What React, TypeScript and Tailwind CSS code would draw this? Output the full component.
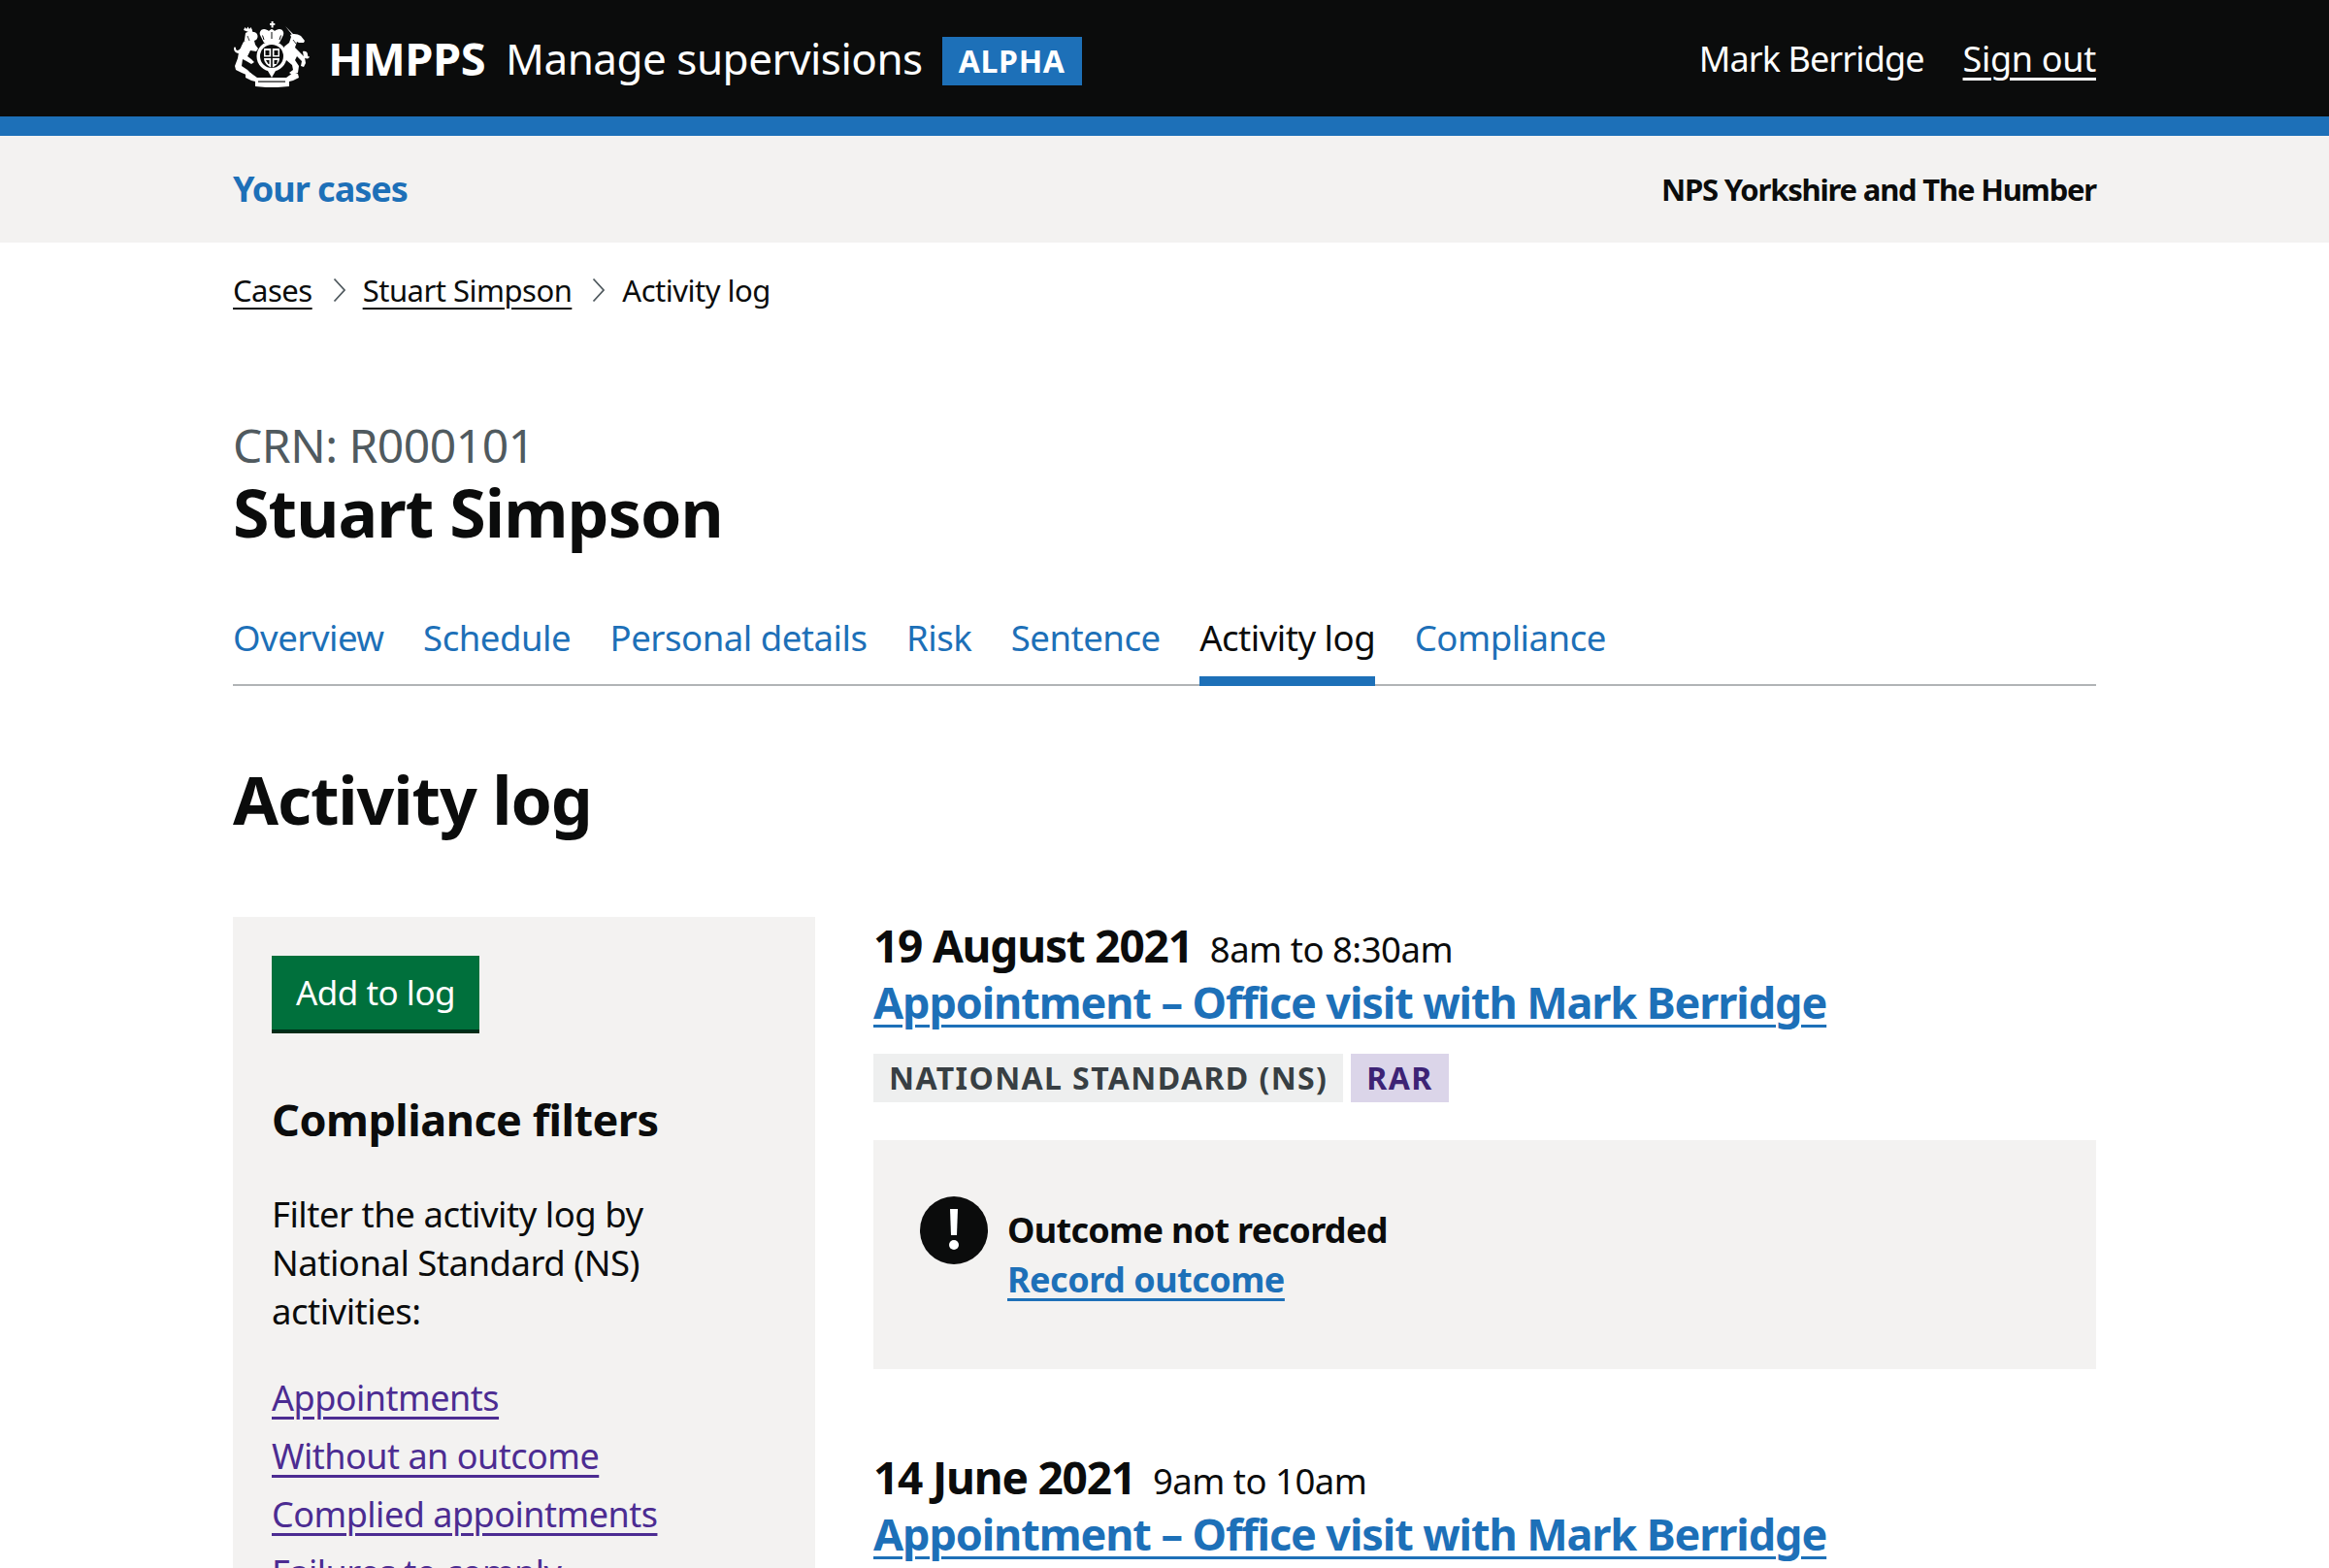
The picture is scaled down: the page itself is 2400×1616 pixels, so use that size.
import React from 'react';

const Crest = () => (
  <svg viewBox="0 0 100 90" className="w-[100px] h-[90px] -mx-[10px]" fill="#fff" stroke="none">
    {/* top crown */}
    <path d="M48 9h1.600V7h2v2h1.700v2h-1.700v2.500h-2V11H48z" />
    <path d="M42 29l-4-8c-1-3 1-6 4-6 2 0 4 1 5 2 1-1 2-2 3-2s2 1 3 2c1-1 3-2 5-2 3 0 5 3 4 6l-4 8z" />
    <path d="M42 26l-1.500-4.500M50 18v7M58 26l1.500-4.500" stroke="#0b0c0c" strokeWidth="1" />
    {/* lion */}
    <path d="M21 16l1.500-3 1.500 2 1.500-2.500 1.500 2.500 1.500-2 1.500 3v2l-1 1z" />
    <path d="M23 19c3-2 8-2 11 0 2 2 2 5 0 7l-2 1 1 4 3 4-2 3-6-1-3 6 4 3 3 3-3 2-5-3-4-2-1 7 6 4 4 4-3 2-7-3-6-3-1-4 3-8 1-6 3-7 3-6z" />
    <path d="M18 35c-3 3-5 2-5 0s-2-2-2 0c0 4 5 7 8 3z" />
    <path d="M20 24l2 4M25 22l2 5" stroke="#0b0c0c" strokeWidth="0.8" />
    {/* unicorn */}
    <path d="M64 12l8 8 1 0-1 2z" />
    <path d="M69 21c3-2 8-1 11 1l4 5-1 2-5 0-2-1-2 6 4 4 6 6 1 6-2 4-3-1 1-5-5-5-2 4 4 6-1 7-6 2-3-2 4-3-1-5-6-5-4 2-3-3 3-5 2-8 5-4 2-6z" />
    <path d="M82 38c3-1 5 1 5 3 0 2 1 3 2 2 0 3-4 3-6 1z" />
    <path d="M72 26l3 4" stroke="#0b0c0c" strokeWidth="0.8" />
    {/* shield */}
    <circle cx="50" cy="43" r="15.500" />
    <circle cx="50" cy="43" r="12" fill="#0b0c0c" />
    <path d="M42 35h16v10c0 5-4 8-8 10-4-2-8-5-8-10z" fill="#fff" />
    <path d="M49.200 35h1.600v20h-1.600zM42 43.500h16v1.600H42z" fill="#0b0c0c" />
    <path d="M43.500 37h4v5h-4zM52.500 37h4v5h-4zM44 47h3.500v4h-1zM52.500 47H56l-1 4h-2.500z" fill="#0b0c0c" />
    {/* ribbon */}
    <path d="M23 61l5-1 7 5 30 0 7-5 5 1 1 4-6 3-4 1v5l-12 1H44l-11-1v-5l-4-1-6-3z" />
    <path d="M36 68.500h28v1.200H36z" fill="#0b0c0c" />
    <path d="M46 58h8l-4 7z" />
  </svg>
);

const Chevron = () => (
  <svg viewBox="0 0 13 26" className="w-[13px] h-[26px] ml-[21px] mr-[18px] shrink-0" fill="none" stroke="#505a5f" strokeWidth="1.800">
    <path d="M1.500 1.500L12 13 1.500 24.500" />
  </svg>
);

const tabs = ['Overview', 'Schedule', 'Personal details', 'Risk', 'Sentence', 'Activity log', 'Compliance'];
const filters = ['Appointments', 'Without an outcome', 'Complied appointments', 'Failures to comply'];

const Entry = ({ date, time }: { date: string; time: string }) => (
  <>
    <div className="flex items-baseline gap-[18px] h-[59px]">
      <span className="text-[46px] leading-[58px] font-bold tracking-[-1.200px]">{date}</span>
      <span className="text-[36.500px] leading-[58px]">{time}</span>
    </div>
    <a className="block w-fit text-[45px] leading-[58px] font-bold tracking-[-1.100px] text-[#1d70b8] underline decoration-[3px] underline-offset-[6px]">
      Appointment – Office visit with Mark Berridge
    </a>
  </>
);

export default function App() {
  return (
    <div className="h-[1616px] overflow-hidden bg-white text-[#0b0c0c] font-['Noto_Sans',sans-serif] tracking-[-0.5px]">
      {/* Header */}
      <header className="bg-[#0b0c0c] border-b-[20px] border-[#1d70b8] text-white">
        <div className="w-[1920px] mx-auto h-[120px] flex items-center justify-between">
          <div className="flex items-center">
            <Crest />
            <span className="ml-[18px] text-[47px] font-bold">HMPPS</span>
            <span className="ml-[21px] text-[44px]">Manage supervisions</span>
            <span className="ml-[20px] mt-[6px] h-[50px] px-[17px] bg-[#1d70b8] text-[32px] font-bold tracking-[0.7px] flex items-center">ALPHA</span>
          </div>
          <div className="flex items-center gap-[40px] text-[36px] mt-[2px]">
            <span className="tracking-[-0.900px]">Mark Berridge</span>
            <a className="tracking-[-0.300px] underline decoration-[3px] underline-offset-[6px]">Sign out</a>
          </div>
        </div>
      </header>

      {/* Sub nav */}
      <div className="bg-[#f3f2f1] h-[110px]">
        <div className="w-[1920px] mx-auto h-full flex items-center justify-between">
          <a className="text-[36px] font-bold tracking-[-1px] text-[#1d70b8]">Your cases</a>
          <span className="text-[31px] font-bold tracking-[-1.200px]">NPS Yorkshire and The Humber</span>
        </div>
      </div>

      <main className="w-[1920px] mx-auto">
        {/* Breadcrumbs */}
        <nav className="flex items-center h-[98px] text-[31px] tracking-[-0.500px]">
          <a className="underline decoration-2 underline-offset-[6px]">Cases</a>
          <Chevron />
          <a className="underline decoration-2 underline-offset-[6px]">Stuart Simpson</a>
          <Chevron />
          <span>Activity log</span>
        </nav>

        {/* Title */}
        <div className="pt-[81px]">
          <div className="text-[48px] leading-[60px] text-[#505a5f]">CRN: R000101</div>
          <h1 className="text-[68px] leading-[78px] font-bold tracking-[-0.9px]">Stuart Simpson</h1>
        </div>

        {/* Tabs */}
        <div className="mt-[55px] h-[85px] flex gap-[40.500px] border-b-2 border-[#b1b4b6] text-[36.600px] text-[#1d70b8]">
          {tabs.map((t) => (
            <a
              key={t}
              className={t === 'Activity log' ? 'h-[85px] pt-[8px] border-b-[10px] border-[#1d70b8] text-[#0b0c0c]' : 'pt-[8px]'}
            >
              {t}
            </a>
          ))}
        </div>

        <h2 className="mt-[72px] text-[68px] leading-[90px] font-bold tracking-[-1.100px]">Activity log</h2>

        <div className="mt-[76px] flex gap-[60px]">
          {/* Sidebar */}
          <aside className="w-[600px] shrink-0 h-[800px] bg-[#f3f2f1] p-[40px]">
            <button className="block h-[76px] w-[214px] bg-[#00703c] text-white text-[35px] shadow-[0_4px_0_#002d18]">Add to log</button>
            <h3 className="mt-[63px] text-[45px] leading-[60px] font-bold">Compliance filters</h3>
            <p className="mt-[42px] text-[36.500px] leading-[50px]">
              Filter the activity log by
              <br />
              National Standard (NS)
              <br />
              activities:
            </p>
            <ul className="mt-[35px] text-[36px] leading-[60px] text-[#4c2c92]">
              {filters.map((f) => (
                <li key={f}>
                  <a className="underline decoration-[3px] underline-offset-[6px]">{f}</a>
                </li>
              ))}
            </ul>
          </aside>

          {/* Activity */}
          <section className="flex-1">
            <Entry date="19 August 2021" time="8am to 8:30am" />
            <div className="mt-[24px] flex gap-[8px] text-[32px] font-bold tracking-[1.400px]">
              <span className="h-[50px] px-[16px] flex items-center bg-[#eeefef] text-[#383f43]">NATIONAL STANDARD (NS)</span>
              <span className="h-[50px] px-[16px] flex items-center bg-[#dbd5e9] text-[#3d2375]">RAR</span>
            </div>
            <div className="mt-[39px] h-[236px] bg-[#f3f2f1] pl-[48px] pt-[58px] flex gap-[20px]">
              <svg viewBox="0 0 70 70" className="w-[70px] h-[70px] shrink-0">
                <circle cx="35" cy="35" r="35" fill="#0b0c0c" />
                <path d="M31 13h8l-1 27h-6z" fill="#fff" />
                <circle cx="35" cy="50" r="5" fill="#fff" />
              </svg>
              <div className="pt-[9px]">
                <div className="text-[36px] leading-[52px] font-bold tracking-[-0.700px]">Outcome not recorded</div>
                <a className="text-[36px] leading-[50px] font-bold text-[#1d70b8] underline decoration-[3px] underline-offset-[6px]">Record outcome</a>
              </div>
            </div>
            <div className="mt-[82px]">
              <Entry date="14 June 2021" time="9am to 10am" />
            </div>
          </section>
        </div>
      </main>
    </div>
  );
}
